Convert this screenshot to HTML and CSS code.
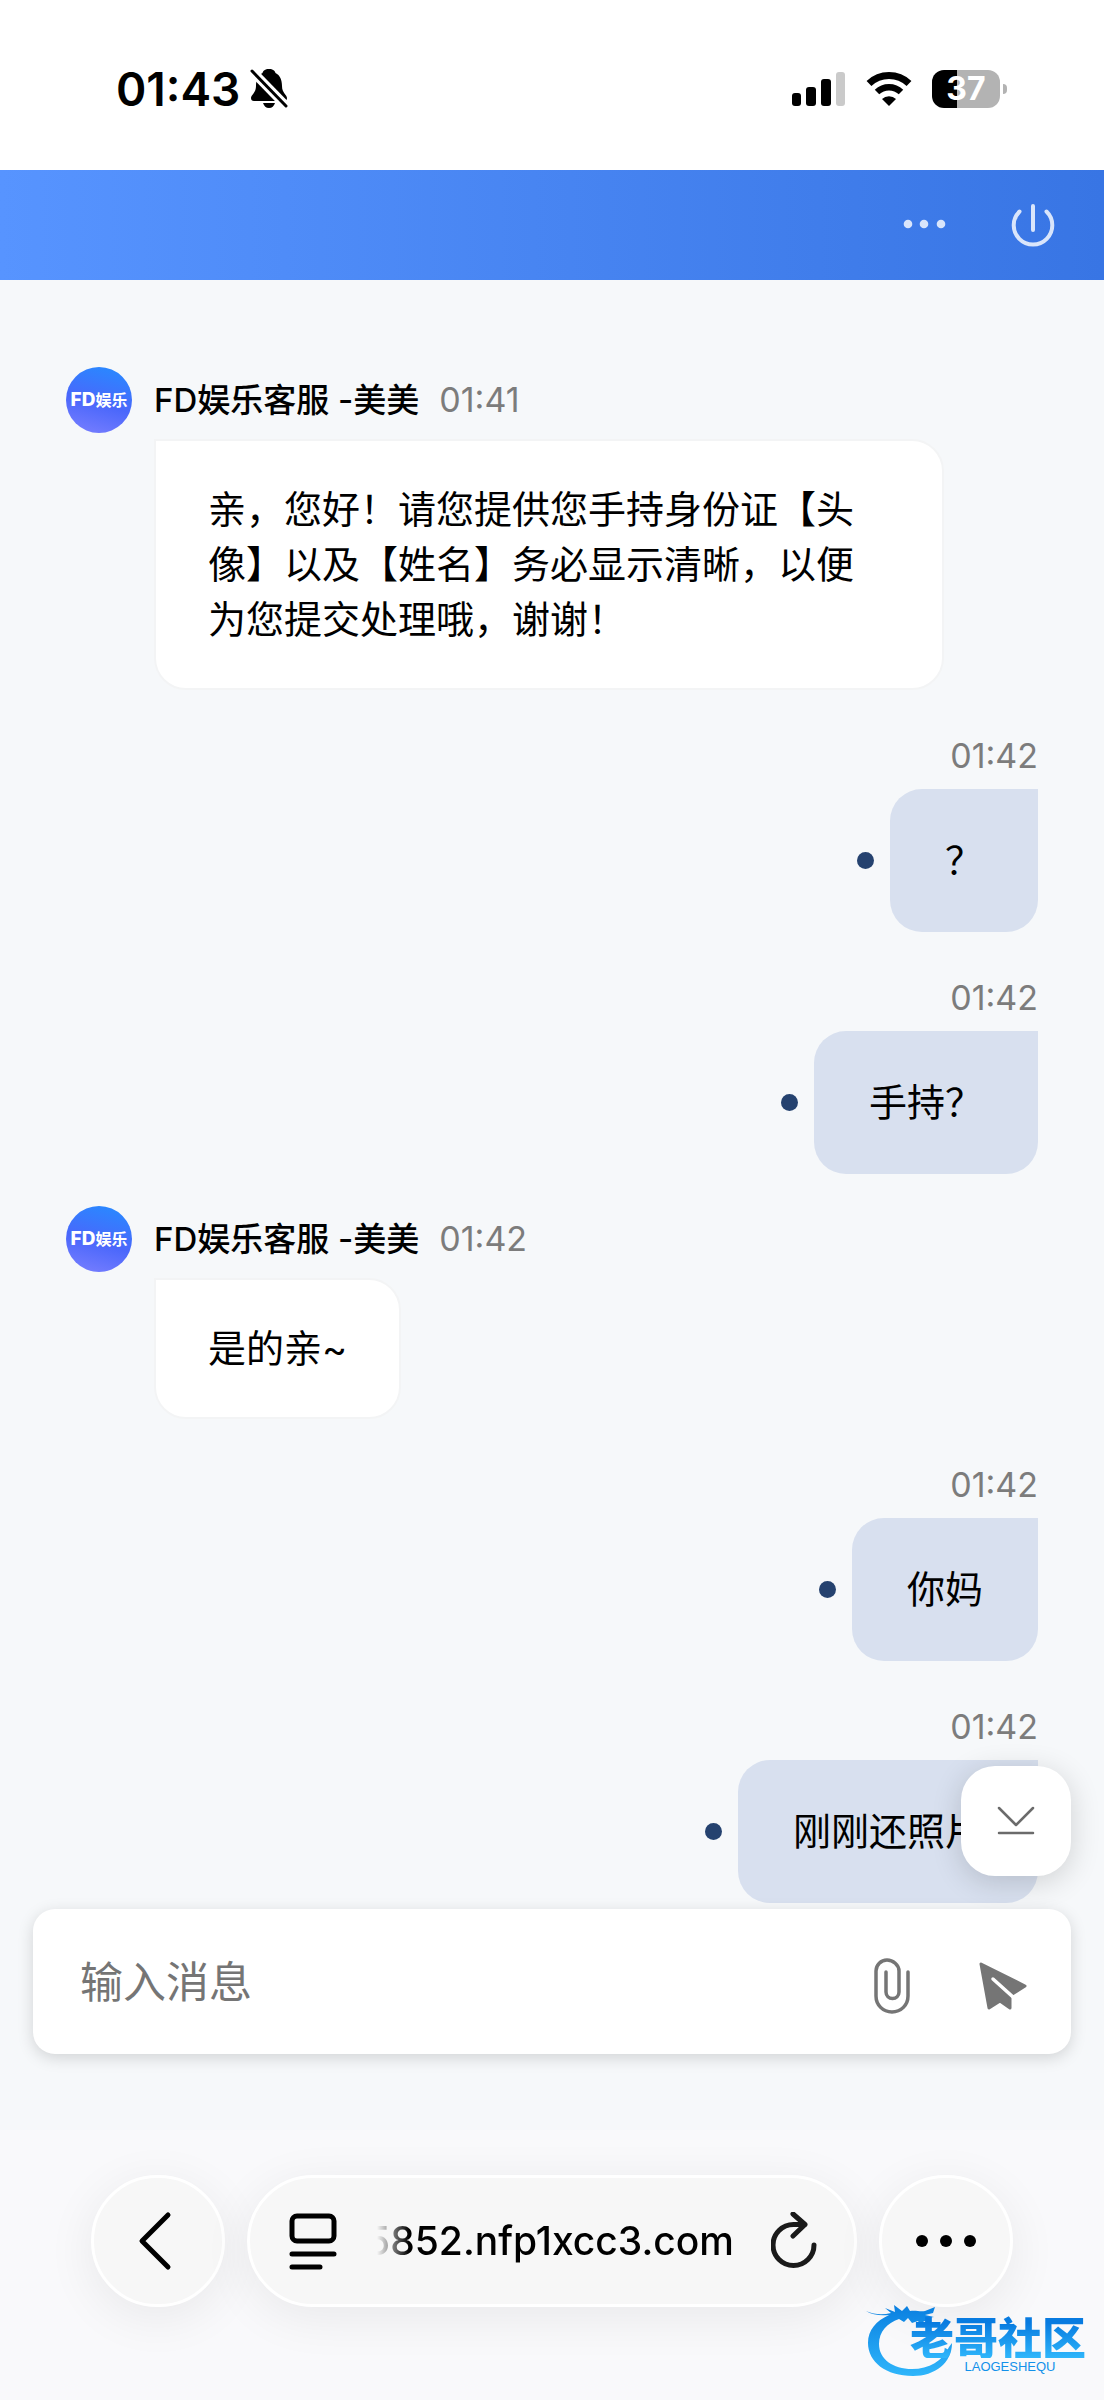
FILE: index.html
```html
<!DOCTYPE html>
<html lang="zh-CN">
<head>
    <meta charset="UTF-8">
    <meta name="viewport" content="width=device-width, initial-scale=1.0">
    <title>FD娱乐客服</title>
    <link rel="stylesheet" href="styles.css">
</head>
<body>
    <div class="status-bar">
        <div class="status-left">
            <span class="clock">01:43</span>
            <svg width="38" height="42" viewBox="0 0 38 42">
                <path d="M19 1c-4 0-6 2-6.500 4C8 7 6 12 6 18c0 7-5 9-5 12 0 2 1 3 3 3h30c2 0 3-1 3-3 0-3-5-5-5-12 0-6-2-11-6.500-13C25 3 23 1 19 1z"/>
                <path d="M13 35h12c-1 3-3 5-6 5s-5-2-6-5z"/>
                <path d="M1 2l36 37" stroke="#fff" stroke-width="9"/>
                <path d="M2 3l34 35" stroke="#000" stroke-width="3" stroke-linecap="round"/>
            </svg>
        </div>
        <div class="status-right">
            <svg width="54" height="36" viewBox="0 0 54 36">
                <rect x="0" y="22" width="9" height="13" rx="3"/>
                <rect x="14" y="16" width="10" height="19" rx="3"/>
                <rect x="29" y="8" width="10" height="27" rx="3"/>
                <rect x="44" y="1" width="9" height="34" rx="3" fill="#cacaca"/>
            </svg>
            <svg width="46" height="36" viewBox="0 0 46 36">
                <path d="M3 12.500a29 29 0 0 1 40 0" fill="none" stroke="#000" stroke-width="7"/>
                <path d="M11 21a17.500 17.500 0 0 1 24 0" fill="none" stroke="#000" stroke-width="6.500"/>
                <path d="M16 28a10 10 0 0 1 14 0l-7 7z"/>
            </svg>
            <div class="battery"><span>37</span></div>
        </div>
    </div>

    <header class="header">
        <button type="button" aria-label="更多">
            <svg width="44" height="44" viewBox="0 0 44 44" fill="#d9e5fb">
                <circle cx="6" cy="21" r="4.300"/><circle cx="22" cy="21" r="4.300"/><circle cx="39" cy="21" r="4.300"/>
            </svg>
        </button>
        <button type="button" aria-label="退出">
            <svg width="44" height="44" viewBox="0 0 44 44" fill="none" stroke="#d9e5fb" stroke-width="4" stroke-linecap="round">
                <path d="M22 3v24M8.500 8.500a19.300 19.300 0 1 0 27 0"/>
            </svg>
        </button>
    </header>

    <main class="chat">
        <div class="message agent">
            <div class="message-head">
                <div class="avatar">FD<span>娱乐</span></div>
                <span class="name">FD娱乐客服 -美美</span>
                <span class="time">01:41</span>
            </div>
            <div class="bubble">亲，您好！请您提供您手持身份证【头像】以及【姓名】务必显示清晰，以便为您提交处理哦，谢谢！</div>
        </div>
        <div class="message user">
            <span class="time">01:42</span>
            <div class="bubble">？</div>
        </div>
        <div class="message user">
            <span class="time">01:42</span>
            <div class="bubble">手持？</div>
        </div>
        <div class="message agent">
            <div class="message-head">
                <div class="avatar">FD<span>娱乐</span></div>
                <span class="name">FD娱乐客服 -美美</span>
                <span class="time">01:42</span>
            </div>
            <div class="bubble">是的亲~</div>
        </div>
        <div class="message user">
            <span class="time">01:42</span>
            <div class="bubble">你妈</div>
        </div>
        <div class="message user">
            <span class="time">01:42</span>
            <div class="bubble">刚刚还照片</div>
        </div>
    </main>

    <form class="composer">
        <button type="button" class="scroll-down" aria-label="滚动到底部">
            <svg width="38" height="32" viewBox="0 0 38 32" fill="none" stroke="#6b6b6b" stroke-width="2.500" stroke-linecap="round" stroke-linejoin="round">
                <path d="M2 3l17 17L36 3M2 28h34"/>
            </svg>
        </button>
        <input type="text" placeholder="输入消息" aria-label="输入消息">
        <button type="button" aria-label="附件">
            <svg width="36" height="56" viewBox="0 0 36 56" fill="none" stroke="#757575" stroke-width="3.500" stroke-linecap="round">
                <path d="M34 14v24c0 9-7 16-16 16S2 47 2 38V13C2 7 7 2 13 2s12 5 12 11v21c0 4-3 6.500-6.500 6.500S12 38 12 34V14"/>
            </svg>
        </button>
        <button type="submit" aria-label="发送">
            <svg width="48" height="48" viewBox="0 0 48 48">
                <path d="M2 2l44 22-13.500 8.500L15 17l16 18.500V46l-10-7-11 7z" fill="#757575" stroke="#757575" stroke-width="3" stroke-linejoin="round"/>
                <path d="M14 17l20 18" stroke="#fff" stroke-width="3.500" stroke-linecap="round"/>
            </svg>
        </button>
    </form>

    <footer class="browser-bar">
        <nav class="toolbar">
            <button type="button" class="round" aria-label="后退">
                <svg width="42" height="60" viewBox="0 0 42 60" fill="none" stroke="#000" stroke-width="5" stroke-linecap="round" stroke-linejoin="round">
                    <path d="M31 4L5 30l26 26"/>
                </svg>
            </button>
            <div class="address">
                <button type="button" aria-label="页面设置">
                    <svg width="48" height="58" viewBox="0 0 48 58" fill="none" stroke="#000" stroke-width="5" stroke-linecap="round">
                        <rect x="3" y="4" width="42" height="25" rx="5"/>
                        <path d="M3 42h42M3 55h28"/>
                    </svg>
                </button>
                <a class="url" href="#"><span>5852.nfp1xcc3.com</span></a>
                <button type="button" aria-label="重新加载">
                    <svg width="46" height="58" viewBox="0 0 46 58" fill="none" stroke="#1a1a1a" stroke-width="5" stroke-linecap="round" stroke-linejoin="round">
                        <path d="M43 33a20.500 20.500 0 1 1-20.500-20.500H34M22 2l12 10.500L22 24"/>
                    </svg>
                </button>
            </div>
            <button type="button" class="round" aria-label="更多选项">
                <svg width="62" height="14" viewBox="0 0 62 14">
                    <circle cx="7" cy="7" r="6"/><circle cx="31" cy="7" r="6"/><circle cx="55" cy="7" r="6"/>
                </svg>
            </button>
        </nav>
        <div class="watermark">
            <svg width="92" height="76" viewBox="0 0 92 76">
                <defs>
                    <linearGradient id="dragon" x1="0" y1="0" x2="0" y2="1">
                        <stop offset="0" stop-color="#0a7fe0"/>
                        <stop offset="1" stop-color="#2fb6fb"/>
                    </linearGradient>
                </defs>
                <path fill="url(#dragon)" d="M0 9c9 4 17 4 25 2l-6-5 10 4-1-7 8 6 5-5 3 5c6-1 10 1 15 0l10-4-2 6-8 2 9 2-6 1 3 6-7-3-3 5-3-5-6 2-4-5-4 4-5-3C21 21 13 30 13 42c0 15 14 25 33 25 17 0 31-8 37-22l3-4c0 20-17 33-39 33C20 74 2 60 2 41c0-13 8-22 21-28-8 1-17 0-23-4z"/>
            </svg>
            <div class="watermark-text">
                <strong>老哥社区</strong>
                <small>LAOGESHEQU</small>
            </div>
        </div>
    </footer>
</body>
</html>
```
FILE: styles.css
```css
* {
    box-sizing: border-box;
}
body {
    margin: 0;
    min-height: 100vh;
    display: flex;
    flex-direction: column;
    font-family: Inter, "Noto Sans CJK SC", sans-serif;
    background-color: #f6f8fa;
    color: #000;
}
button {
    padding: 0;
    border: none;
    background: none;
    cursor: pointer;
}
svg {
    display: block;
}

.status-bar {
    display: flex;
    justify-content: space-between;
    align-items: center;
    height: 170px;
    padding: 8px 97px 0 116px;
    background-color: #fff;
}
.status-left {
    display: flex;
    align-items: center;
    gap: 10px;
}
.clock {
    font-size: 46px;
    font-weight: 600;
    line-height: 56px;
}
.status-right {
    display: flex;
    align-items: center;
    gap: 20px;
}
.battery {
    position: relative;
    width: 68px;
    height: 38px;
    margin-right: 7px;
    border-radius: 12px;
    background: linear-gradient(to right, #000 37%, #b3b3b3 37%);
    color: #fff;
    font-size: 32px;
    font-weight: 700;
    line-height: 38px;
    text-align: center;
}
.battery::after {
    content: "";
    position: absolute;
    top: 14px;
    right: -7px;
    width: 4px;
    height: 10px;
    border-radius: 0 4px 4px 0;
    background-color: #b3b3b3;
}

.header {
    display: flex;
    justify-content: flex-end;
    align-items: center;
    gap: 65px;
    height: 110px;
    padding: 0 49px;
    background: linear-gradient(to right, #5794ff, #3875e4);
}

.chat {
    flex: 1;
    display: flex;
    flex-direction: column;
    gap: 32px;
    padding: 87px 66px 0;
}
.message {
    display: flex;
    flex-direction: column;
}
.message-head {
    display: flex;
    align-items: center;
    height: 66px;
    margin-bottom: 6px;
}
.avatar {
    display: flex;
    justify-content: center;
    align-items: center;
    width: 66px;
    height: 66px;
    margin-right: 22px;
    border-radius: 50%;
    background: linear-gradient(15deg, #7b80ff, #4a67fb 45%, #2b86ff 90%);
    color: #fff;
    font-size: 19px;
    font-weight: 800;
    line-height: 20px;
}
.avatar span {
    font-size: 16px;
    font-weight: 700;
}
.name {
    margin-right: 20px;
    font-size: 33px;
    font-weight: 500;
    line-height: 40px;
}
.time {
    color: #7c7c7c;
    font-size: 34px;
    line-height: 40px;
}
.bubble {
    position: relative;
    font-size: 38px;
    line-height: 55px;
}
.agent .bubble {
    align-self: flex-start;
    max-width: calc(100% - 182px);
    margin-left: 88px;
    padding: 41px 52px;
    border: 2px solid #f3f4f5;
    border-radius: 0 32px 32px 32px;
    background-color: #fff;
}
.user {
    align-items: flex-end;
}
.user .time {
    line-height: 67px;
}
.user .bubble {
    padding: 44px 55px;
    border-radius: 32px 0 32px 32px;
    background-color: #d8e0ef;
}
.user .bubble::before {
    content: "";
    position: absolute;
    top: 63px;
    left: -33px;
    width: 17px;
    height: 17px;
    border-radius: 50%;
    background-color: #25426f;
}

.composer {
    position: relative;
    display: flex;
    align-items: center;
    height: 145px;
    margin: 6px 33px 76px;
    padding: 0 44px 0 47px;
    border-radius: 22px;
    background-color: #fff;
    box-shadow: 0 4px 16px rgba(0, 0, 0, 0.15);
}
.composer input {
    flex: 1;
    min-width: 0;
    height: 64px;
    padding: 0 0 6px;
    border: none;
    outline: none;
    background: none;
    font-family: "Noto Sans CJK SC", sans-serif;
    font-size: 43px;
}
.composer input::placeholder {
    color: #757575;
    opacity: 1;
}
.composer button {
    margin-top: 8px;
    margin-left: 69px;
}
.composer .scroll-down {
    position: absolute;
    right: 0;
    bottom: calc(100% + 33px);
    display: flex;
    justify-content: center;
    align-items: center;
    width: 110px;
    height: 110px;
    margin: 0;
    border-radius: 34px;
    background-color: #fff;
    box-shadow: 0 6px 30px rgba(0, 0, 0, 0.16);
}

.browser-bar {
    position: relative;
    height: 270px;
    padding: 45px 91px 0;
    background-color: #f9f9fb;
}
.toolbar {
    display: flex;
    gap: 22px;
}
.round,
.address {
    display: flex;
    align-items: center;
    height: 132px;
    border: 3px solid #fff;
    border-radius: 66px;
    background-color: #f7f7f7;
    box-shadow: 0 10px 50px rgba(0, 0, 0, 0.07);
}
.round {
    justify-content: center;
    width: 134px;
}
.address {
    flex: 1;
    min-width: 0;
    padding: 0 37px 0 39px;
}
.url {
    flex: 1;
    min-width: 0;
    display: flex;
    justify-content: flex-end;
    overflow: hidden;
    margin: 0 37px 0 36px;
    color: #000;
    font-size: 39px;
    font-weight: 500;
    line-height: 50px;
    text-decoration: none;
    -webkit-mask-image: linear-gradient(to right, transparent 4px, #000 36px);
    mask-image: linear-gradient(to right, transparent 4px, #000 36px);
}
.watermark {
    position: absolute;
    right: 18px;
    bottom: 22px;
    display: flex;
}
.watermark-text {
    display: flex;
    flex-direction: column;
    align-items: center;
    margin-left: -48px;
    padding-top: 12px;
    color: #1391ea;
}
.watermark-text strong {
    font-family: "Noto Sans CJK SC", sans-serif;
    font-size: 44px;
    font-weight: 900;
    line-height: 44px;
    background: linear-gradient(#087be0 20%, #2fb6fb);
    -webkit-background-clip: text;
    background-clip: text;
    color: transparent;
}
.watermark-text small {
    padding-left: 24px;
    font-family: "Liberation Sans", sans-serif;
    font-size: 13px;
    line-height: 18px;
}
```
